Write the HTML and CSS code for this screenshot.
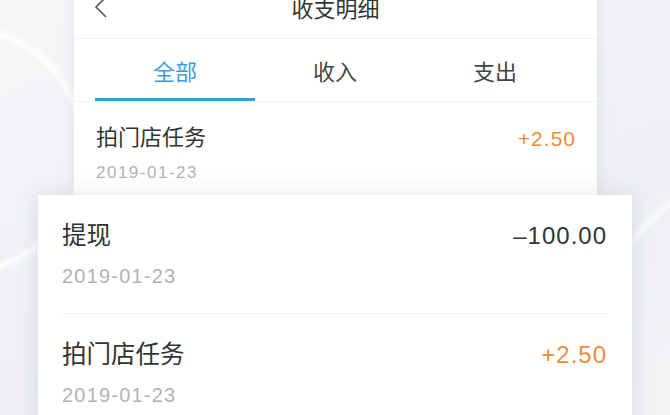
FILE: index.html
```html
<!DOCTYPE html>
<html lang="zh-CN">
<head>
    <meta charset="UTF-8">
    <title>收支明细</title>
    <link rel="stylesheet" href="styles.css">
</head>
<body>

    <div class="stage">
        <!-- 手机页面 -->
        <div class="phone">
            <div class="nav">
                <svg class="back" width="14" height="24" viewBox="0 0 14 24">
                    <polyline points="12,2 2,12 12,22" fill="none" stroke="#555" stroke-width="1.6"/>
                </svg>
                <span class="nav-title">收支明细</span>
            </div>
            <div class="tabs">
                <div class="tab active">全部</div>
                <div class="tab">收入</div>
                <div class="tab">支出</div>
            </div>
            <div class="row">
                <div class="line">
                    <span class="name">拍门店任务</span>
                    <span class="amount plus">+2.50</span>
                </div>
                <div class="date">2019-01-23</div>
            </div>
        </div>

        <!-- 放大的列表 -->
        <div class="zoom-card">
            <div class="row big">
                <div class="line">
                    <span class="name">提现</span>
                    <span class="amount">–100.00</span>
                </div>
                <div class="date">2019-01-23</div>
            </div>
            <div class="row big">
                <div class="line">
                    <span class="name">拍门店任务</span>
                    <span class="amount plus">+2.50</span>
                </div>
                <div class="date">2019-01-23</div>
            </div>
        </div>
    </div>

</body>
</html>
```

FILE: styles.css
```css
body {
    margin: 0;
    width: 670px;
    height: 415px;
    overflow: hidden;
    font-family: "Liberation Sans", "Noto Sans CJK SC", sans-serif;
    background-color: #f1f2f5;
    background-image:
        radial-gradient(circle at -40px 150px, transparent 118px, rgba(255,255,255,0.8) 122px, transparent 130px),
        radial-gradient(circle at 760px 330px, transparent 150px, rgba(255,255,255,0.7) 154px, transparent 162px),
        linear-gradient(160deg, #f6f7f9 0%, #eef0f3 60%, #f3f4f6 100%);
}
.stage {
    width: 670px;
}
.phone {
    margin: -24px 0 0 74px;
    width: 523px;
    height: 219px;
    background-color: #ffffff;
    box-shadow: 0 0 16px rgba(60, 70, 90, 0.10);
}
.nav {
    height: 63px;
    box-sizing: border-box;
    border-bottom: 1px solid #f1f2f4;
    display: flex;
    align-items: center;
    justify-content: center;
    position: relative;
}
.back {
    position: absolute;
    left: 20px;
    top: 19px;
}
.nav-title {
    font-size: 22px;
    color: #333;
}
.tabs {
    display: flex;
    height: 62px;
    padding: 0 22px 0 21px;
    border-bottom: 1px solid #f1f2f4;
}
.tab {
    flex: 1;
    display: flex;
    align-items: center;
    justify-content: center;
    font-size: 22px;
    color: #444;
    position: relative;
}
.tab.active {
    color: #3a9de0;
}
.tab.active::after {
    content: "";
    position: absolute;
    left: 0;
    right: 0;
    bottom: 0;
    height: 3px;
    background-color: #3a9ad8;
}
.row {
    padding: 25px 21px 0 22px;
}
.line {
    display: flex;
    justify-content: space-between;
    align-items: center;
}
.name {
    font-size: 22px;
    line-height: 22px;
    color: #333;
}
.amount {
    font-size: 21px;
    line-height: 21px;
    color: #333;
    letter-spacing: 1px;
}
.amount.plus {
    color: #f28a3e;
}
.date {
    margin-top: 15px;
    font-size: 17px;
    line-height: 17px;
    color: #b3b3b3;
    letter-spacing: 1.5px;
}
.zoom-card {
    margin-left: 38px;
    width: 594px;
    height: 240px;
    box-sizing: border-box;
    padding: 0 25px 0 24px;
    background-color: #ffffff;
    box-shadow: 0 0 22px rgba(60, 70, 90, 0.14);
}
.row.big {
    padding: 29px 0 27px 0;
    border-bottom: 1px solid #f3f3f4;
}
.row.big .name {
    font-size: 24.5px;
    line-height: 24px;
}
.row.big .amount {
    font-size: 24px;
    line-height: 24px;
}
.row.big .date {
    margin-top: 18px;
    font-size: 20px;
    line-height: 20px;
    letter-spacing: 1.2px;
}
```
